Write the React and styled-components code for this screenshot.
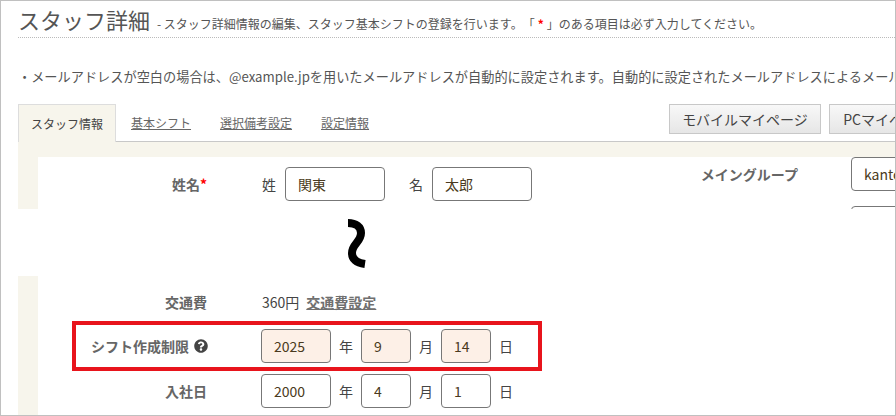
import React from 'react';
import styled, { createGlobalStyle } from 'styled-components';
import { FaQuestionCircle } from 'react-icons/fa';

const cream = '#f7f5ec';
const line = '#c8c8c8';

const Global = createGlobalStyle`
  html, body {
    margin: 0;
    padding: 0;
    background: #fff;
  }
  body {
    font-family: "Noto Sans CJK JP", "Noto Sans", sans-serif;
    color: #555;
    text-spacing-trim: space-all;
  }
`;

const Frame = styled.div`
  box-sizing: border-box;
  width: 896px;
  height: 416px;
  padding: 0 0 0 17px;
  border: 1px solid #c0c0c0;
  overflow: hidden;
`;

const Header = styled.header`
  display: flex;
  align-items: baseline;
  height: 35px;
  padding-top: 1px;
  border-bottom: 1px dotted #bbb;
  white-space: nowrap;
`;

const Title = styled.h1`
  margin: 0;
  font-size: 22px;
  line-height: 34px;
  font-weight: 400;
  color: #555;
`;

const Lead = styled.span`
  margin-left: 7px;
  font-size: 12px;
  color: #555;
`;

const Star = styled.span`
  color: #f00;
  font-weight: 700;
`;

const LeadStar = styled(Star)`
  padding: 0 3px;
`;

const Notice = styled.p`
  margin: 27px 0 0;
  font-size: 13.2px;
  line-height: 24px;
  white-space: nowrap;
`;

const TabBar = styled.div`
  display: flex;
  align-items: flex-start;
  margin-top: 15px;
  height: 37px;
  border-bottom: 1px solid ${line};
`;

const Tab = styled.a`
  box-sizing: border-box;
  flex: none;
  font-size: 12px;
  line-height: 37px;
  white-space: nowrap;
  color: #666;
  text-decoration: underline;
  margin-right: 29px;
`;

const ActiveTab = styled(Tab)`
  width: 98px;
  height: 38px;
  margin-right: 15px;
  text-align: center;
  color: #444;
  text-decoration: none;
  background: ${cream};
  border: 1px solid #ddd;
  border-bottom: none;
`;

const Buttons = styled.div`
  display: flex;
  flex: none;
  gap: 8px;
  margin-left: auto;
  margin-right: -50px;
`;

const Button = styled.button`
  flex: none;
  width: ${p => p.$w}px;
  height: 30px;
  padding: 0;
  font: 400 14px "Noto Sans CJK JP", sans-serif;
  color: #444;
  text-align: center;
  white-space: nowrap;
  background: linear-gradient(#f8f8f8, #e6e6e6);
  border: 1px solid ${line};
`;

const TopPanel = styled.section`
  display: flex;
  height: 67px;
  padding: 15px 0 0 20px;
  box-sizing: border-box;
  background: ${cream};
`;

const BottomPanel = styled.section`
  padding-left: 20px;
  background: ${cream};
  height: 140px;
`;

const White = styled.div`
  background: #fff;
  height: 100%;
`;

const TopWhite = styled(White)`
  display: flex;
  flex: 1;
  overflow: hidden;
`;

const Gap = styled.div`
  height: 67px;
  display: flex;
  padding-left: 328px;
`;

const Row = styled.div`
  display: flex;
  flex: none;
  align-items: center;
  height: 34px;
`;

const FareRow = styled(Row)`
  box-sizing: border-box;
  height: 45px;
  padding-top: 7px;
`;

const Label = styled.div`
  box-sizing: border-box;
  flex: none;
  width: 169px;
  text-align: right;
  font-size: 14px;
  font-weight: 700;
  color: #666;
  white-space: nowrap;
`;

const Value = styled.div`
  display: flex;
  flex: none;
  align-items: center;
  margin-left: ${p => p.$ml || 54}px;
  font-size: 14px;
  color: #444;
  white-space: nowrap;
`;

const Fare = styled.span`
  padding-left: 1px;
`;

const FieldLabel = styled.span`
  flex: none;
  width: 23px;
  margin-left: ${p => p.$ml}px;
  font-size: 14px;
  color: #444;
`;

const Unit = styled.span`
  flex: none;
  width: 30px;
  font-size: 14px;
  color: #444;
  text-align: center;
`;

const Input = styled.input`
  box-sizing: border-box;
  flex: none;
  width: ${p => p.$w}px;
  height: 34px;
  padding: 0 12px;
  font: 400 14px "Noto Sans CJK JP", sans-serif;
  color: #4a3a20;
  background: ${p => (p.$warn ? '#fdf0e7' : '#fff')};
  border: 1px solid #777;
  border-radius: 4px;
  outline: none;
`;

const Left = styled.div`
  flex: none;
  padding-top: 10px;
`;

const Right = styled.div`
  display: flex;
  flex: none;
  flex-direction: column;
  gap: 15px;
  margin-left: 97px;
`;

const Squiggle = styled.svg`
  display: block;
  flex: none;
  width: 20px;
  height: 50px;
  margin-top: 9px;
`;

const Highlight = styled.div`
  box-sizing: border-box;
  display: flex;
  align-items: center;
  margin: 0 0 3px 34px;
  width: 470px;
  height: 50px;
  border: 4px solid #e8141c;
`;

const HighLabel = styled(Label)`
  width: 132px;
  display: flex;
  justify-content: flex-end;
  align-items: center;
  gap: 5px;
`;

const HighValue = styled(Value)`
  margin-left: 53px;
`;

const Money = styled.a`
  margin-left: 7px;
  font-weight: 700;
  color: #707070;
  text-decoration: underline;
`;

const DateFields = ({ y, m, d, warn }) => (
  <>
    <Input $w={70} $warn={warn} defaultValue={y} />
    <Unit>年</Unit>
    <Input $w={50} $warn={warn} defaultValue={m} />
    <Unit>月</Unit>
    <Input $w={50} $warn={warn} defaultValue={d} />
    <Unit>日</Unit>
  </>
);

export default function App() {
  return (
    <Frame>
      <Global />
      <Header>
        <Title>スタッフ詳細</Title>
        <Lead>
          - スタッフ詳細情報の編集、スタッフ基本シフトの登録を行います。「<LeadStar>*</LeadStar>」のある項目は必ず入力してください。
        </Lead>
      </Header>
      <Notice>
        ・メールアドレスが空白の場合は、@example.jpを用いたメールアドレスが自動的に設定されます。自動的に設定されたメールアドレスによるメール
      </Notice>
      <TabBar>
        <ActiveTab>スタッフ情報</ActiveTab>
        <Tab>基本シフト</Tab>
        <Tab>選択備考設定</Tab>
        <Tab>設定情報</Tab>
        <Buttons>
          <Button $w={152}>モバイルマイページ</Button>
          <Button $w={116}>PCマイページ</Button>
        </Buttons>
      </TabBar>
      <TopPanel>
        <TopWhite>
          <Left>
            <Row>
              <Label>
                姓名<Star>*</Star>
              </Label>
              <Value>
                <FieldLabel $ml={1}>姓</FieldLabel>
                <Input $w={100} defaultValue="関東" />
                <FieldLabel $ml={24}>名</FieldLabel>
                <Input $w={100} defaultValue="太郎" />
              </Value>
            </Row>
          </Left>
          <Right>
            <Row>
              <Label>メイングループ</Label>
              <Value $ml={53}>
                <Input $w={120} defaultValue="kanto" />
              </Value>
            </Row>
            <Row>
              <Label />
              <Value $ml={53}>
                <Input $w={120} />
              </Value>
            </Row>
          </Right>
        </TopWhite>
      </TopPanel>
      <Gap>
        <Squiggle viewBox="0 0 20 50">
          <path
            d="M2 5 C10 5 15 9 15 15 C15 24 6 26 6 35 C6 42 12 45 19 46"
            fill="none"
            stroke="#000"
            strokeWidth="8"
          />
        </Squiggle>
      </Gap>
      <BottomPanel>
        <White>
          <FareRow>
            <Label>交通費</Label>
            <Value>
              <Fare>360円</Fare>
              <Money>交通費設定</Money>
            </Value>
          </FareRow>
          <Highlight>
            <HighLabel>
              シフト作成制限
              <FaQuestionCircle size={14} color="#444" />
            </HighLabel>
            <HighValue>
              <DateFields y="2025" m="9" d="14" warn />
            </HighValue>
          </Highlight>
          <Row>
            <Label>入社日</Label>
            <Value>
              <DateFields y="2000" m="4" d="1" />
            </Value>
          </Row>
        </White>
      </BottomPanel>
    </Frame>
  );
}
